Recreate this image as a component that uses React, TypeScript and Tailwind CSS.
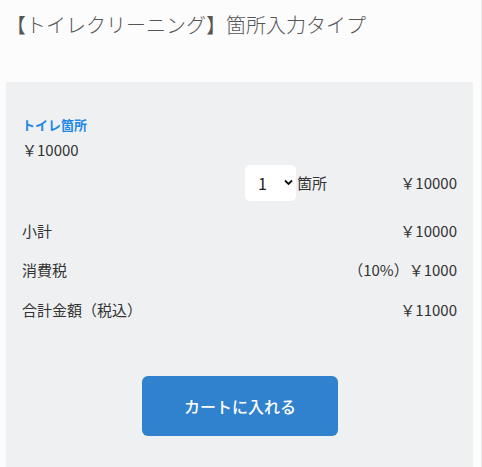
import React from "react";

export default function App() {
  const font = { fontFamily: '"Noto Sans CJK JP", "Noto Sans", sans-serif' };
  return (
    <div className="w-[482px] h-[467px] bg-[#fcfcfd] border-r border-[#ebebeb] overflow-hidden" style={font}>
      <div className="h-[82px] px-[6px] pt-[10px]">
        <h1 className="text-[20px] leading-[30px] text-[#555] font-light">【トイレクリーニング】箇所入力タイプ</h1>
      </div>
      <div className="mx-[6px] w-[467px] h-[385px] bg-[#eff0f2] px-[16px] pt-[33px]">
        <div className="text-[13px] leading-[20px] font-bold text-[#1e88e5]">トイレ箇所</div>
        <div className="text-[15px] leading-[24px] text-[#333] mt-[3px]">￥10000</div>
        <div className="flex items-center justify-end h-[36px] mt-[3px] text-[15px] text-[#333]">
          <div className="relative w-[51px] h-[36px] bg-white rounded-[5px] flex items-center">
            <span className="ml-[13px] text-[16px] text-[#222]">1</span>
            <svg className="absolute left-[39px] top-[14px]" width="9" height="7" viewBox="0 0 9 7">
              <path d="M1 1.5 L4.5 5 L8 1.5" fill="none" stroke="#111" strokeWidth="1.8" />
            </svg>
          </div>
          <span className="ml-[1px]">箇所</span>
          <span className="w-[130px] text-right">￥10000</span>
        </div>
        <div className="flex justify-between text-[15px] leading-[24px] text-[#333] mt-[18px]">
          <span>小計</span>
          <span>￥10000</span>
        </div>
        <div className="flex justify-between text-[15px] leading-[24px] text-[#333] mt-[15px]">
          <span>消費税</span>
          <span>（10%）￥1000</span>
        </div>
        <div className="flex justify-between text-[15px] leading-[24px] text-[#333] mt-[16px]">
          <span>合計金額（税込）</span>
          <span>￥11000</span>
        </div>
        <div className="flex mt-[54px] pl-[120px]">
          <button className="w-[196px] h-[60px] bg-[#3182ce] rounded-[6px] text-white text-[16px] font-medium">カートに入れる</button>
        </div>
      </div>
    </div>
  );
}
